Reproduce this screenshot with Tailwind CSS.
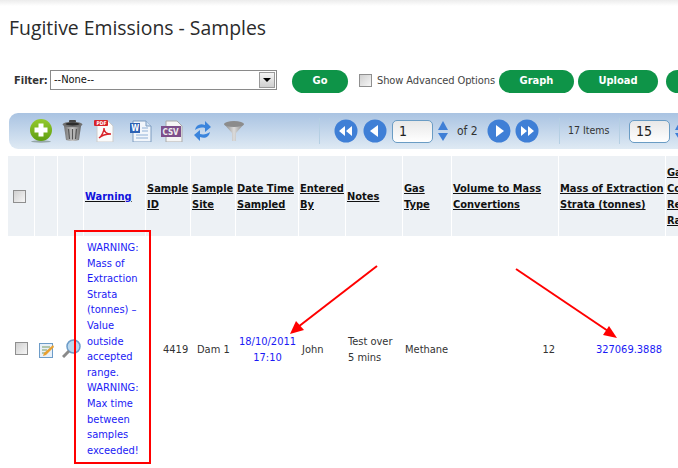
<!DOCTYPE html>
<html lang="en">
<head>
    <meta charset="UTF-8">
    <title>Fugitive Emissions - Samples</title>
    <script src="https://cdn.jsdelivr.net/npm/@tailwindcss/browser@4"></script>
</head>
<body class="relative w-[678px] h-[468px] overflow-hidden bg-white font-['DejaVu_Sans_Condensed','DejaVu_Sans',sans-serif] text-[#333]">

    <div class="h-[6px] bg-gradient-to-b from-[#ececec] to-white"></div>

    <h1 class="pl-[9px] pt-[9px] h-[44px] text-[19.4px] leading-[26px] text-[#2b2b2b] font-['Open_Sans',sans-serif]">Fugitive Emissions - Samples</h1>

    <!-- Filter row -->
    <div class="flex items-center h-[24px] mt-[19px] pl-[14px] whitespace-nowrap">
        <span class="shrink-0 w-[36px] text-[11px] font-bold">Filter:</span>
        <div class="shrink-0 flex items-center justify-between w-[227px] h-[20px] -mt-[2px] border border-[#8a8a8a] pl-[3px] text-[11px] text-[#111]">
            --None--
            <span class="flex items-center justify-center w-[16px] h-[16px] mr-px border border-[#999] bg-gradient-to-b from-[#f4f4f4] to-[#cfcfcf]">
                <span class="w-0 h-0 border-x-[4px] border-x-transparent border-t-[4px] border-t-black"></span>
            </span>
        </div>
        <button class="shrink-0 w-[56px] h-[23px] ml-[15px] rounded-full bg-[#0e9448] text-white text-[11px] font-bold">Go</button>
        <span class="shrink-0 w-[13px] h-[13px] -mt-[2px] ml-[11px] border border-[#8f8f8f] bg-gradient-to-br from-[#d0d0d0] to-[#f6f6f6]"></span>
        <span class="shrink-0 w-[118px] ml-[5px] text-[11px] tracking-[-0.1px] text-[#444]">Show Advanced Options</span>
        <button class="shrink-0 w-[75px] h-[23px] ml-[4px] rounded-full bg-[#0e9448] text-white text-[11px] font-bold">Graph</button>
        <button class="shrink-0 w-[80px] h-[23px] ml-[4px] rounded-full bg-[#0e9448] text-white text-[11px] font-bold">Upload</button>
        <button class="shrink-0 w-[40px] h-[23px] ml-[8px] rounded-full bg-[#0e9448]"></button>
    </div>

    <!-- Toolbar -->
    <div class="flex items-center w-[680px] h-[36px] mt-[20px] ml-[9px] rounded-l-[9px] bg-gradient-to-b from-[#a9c3e2] to-[#dfeaf4] whitespace-nowrap">
        <svg class="ml-[21px] shrink-0" width="22" height="24" viewBox="0 0 22 24">
            <defs><linearGradient id="plusFill" x1="0" y1="0" x2="0" y2="1"><stop offset="0" stop-color="#93c92c"/><stop offset="1" stop-color="#5f9e10"/></linearGradient></defs>
            <ellipse cx="11" cy="22.500" rx="10" ry="1.200" fill="#6b7f78" opacity=".6"/>
            <circle cx="11" cy="11" r="11" fill="url(#plusFill)"/>
            <path d="M8.500 4.500h5v4h4v5h-4v4h-5v-4h-4v-5h4z" fill="#fff"/>
        </svg>
        <svg class="ml-[10px] shrink-0" width="21" height="22" viewBox="0 0 21 22">
            <defs><linearGradient id="binFill" x1="0" y1="0" x2="1" y2="0"><stop offset="0" stop-color="#6f6f6f"/><stop offset=".5" stop-color="#c9c9c9"/><stop offset="1" stop-color="#666"/></linearGradient></defs>
            <path d="M2 6h17l-2 14q-6.500 2-13 0z" fill="url(#binFill)"/>
            <ellipse cx="10.500" cy="4.500" rx="10" ry="2.800" fill="#707070"/>
            <ellipse cx="10.500" cy="4" rx="7" ry="1.500" fill="#2d2d2d"/>
            <rect x="7" y="0" width="7" height="2.500" rx="1" fill="#444"/>
            <path d="M6.500 9l1 10M10.500 9v10.500M14.500 9l-1 10" stroke="#555" stroke-width="1.200"/>
        </svg>
        <svg class="ml-[11px] shrink-0" width="20" height="22" viewBox="0 0 20 22">
            <path d="M3 1h11l5 5v16H3z" fill="#fbfbfb" stroke="#ccc"/>
            <rect width="14" height="6" rx="1" fill="#d8232a"/>
            <text x="2.500" y="5" font-size="5" font-weight="700" fill="#fff">PDF</text>
            <path d="M5 18c3-2 5-7 5-10 0 4 3 6 7 6-4 0-9 1-12 4z" fill="none" stroke="#d8232a" stroke-width="1.300"/>
        </svg>
        <svg class="ml-[16px] shrink-0" width="22" height="22" viewBox="0 0 22 22">
            <path d="M3 1h13l5 5v16H3z" fill="#f2f6fb" stroke="#7d9cc0"/>
            <path d="M16 1v5h5" fill="#cfe0f2" stroke="#7d9cc0"/>
            <rect y="3" width="10" height="10" fill="#2c62b5"/>
            <text x="1.200" y="11" font-size="8" font-weight="700" fill="#fff">W</text>
            <path d="M12 8h6M12 11h6M6 15h12M6 18h12" stroke="#8fb0d6"/>
        </svg>
        <svg class="ml-[9px] shrink-0" width="22" height="22" viewBox="0 0 22 22">
            <path d="M5 1h11l5 5v16H5z" fill="#f5f5f5" stroke="#aaa"/>
            <rect y="6" width="20" height="11" fill="#7d4e8a"/>
            <text x="1.500" y="15" font-size="8" font-weight="700" fill="#eee">CSV</text>
        </svg>
        <svg class="ml-[11px] shrink-0" width="17" height="22" viewBox="0 0 17 22">
            <path d="M1 10C2 5 6 3 11 5V1l6 6-6 5V8C7 7 4 8 1 10zM16 12c-1 5-5 7-10 5v4l-6-6 6-5v4c4 1 7 0 10-2z" fill="#3a84dc"/>
        </svg>
        <svg class="ml-[13px] shrink-0" width="20" height="20" viewBox="0 0 20 20">
            <defs><linearGradient id="funnelFill" x1="0" y1="0" x2="1" y2="0"><stop offset="0" stop-color="#808080"/><stop offset=".5" stop-color="#dcdcdc"/><stop offset="1" stop-color="#808080"/></linearGradient></defs>
            <path d="M0 3q10 5 20 0l-8 9v8H8v-8z" fill="url(#funnelFill)"/>
            <ellipse cx="10" cy="3" rx="10" ry="3" fill="#8c8c8c"/>
        </svg>
        <span class="shrink-0 ml-[75px] w-px h-[26px] bg-[#b5cfe3]"></span>
        <!-- pager -->
        <svg class="ml-[14px] shrink-0" width="24" height="24" viewBox="0 0 24 24"><circle cx="12" cy="12" r="11.500" fill="#3f7fd6"/><path d="M11 7v10l-6-5zM18 7v10l-6-5z" fill="#fff"/></svg>
        <svg class="ml-[5px] shrink-0" width="24" height="24" viewBox="0 0 24 24"><circle cx="12" cy="12" r="11.500" fill="#3f7fd6"/><path d="M15 6v12l-8-6z" fill="#fff"/></svg>
        <span class="shrink-0 ml-[5px] flex items-center w-[41px] h-[23px] pl-[6px] rounded-[5px] border border-[#6a9cc4] bg-gradient-to-b from-[#e8e8e8] to-white text-[14px] text-[#222]">1</span>
        <span class="shrink-0 ml-[5px] flex flex-col gap-[3px]">
            <span class="w-0 h-0 border-x-[5px] border-x-transparent border-b-[9px] border-b-[#3f7fd6]"></span>
            <span class="w-0 h-0 border-x-[5px] border-x-transparent border-t-[8px] border-t-[#3f7fd6]"></span>
        </span>
        <span class="shrink-0 ml-[9px] w-[30px] text-[12px]">of 2</span>
        <svg class="shrink-0" width="24" height="24" viewBox="0 0 24 24"><circle cx="12" cy="12" r="11.500" fill="#3f7fd6"/><path d="M9 6v12l8-6z" fill="#fff"/></svg>
        <svg class="ml-[4px] shrink-0" width="24" height="24" viewBox="0 0 24 24"><circle cx="12" cy="12" r="11.500" fill="#3f7fd6"/><path d="M6 7v10l6-5zM13 7v10l6-5z" fill="#fff"/></svg>
        <span class="shrink-0 ml-[20px] w-px h-[26px] bg-[#b5cfe3]"></span>
        <span class="shrink-0 ml-[8px] w-[51px] text-[10.500px]">17 Items</span>
        <span class="shrink-0 w-px h-[26px] bg-[#b5cfe3]"></span>
        <span class="shrink-0 ml-[9px] flex items-center w-[41px] h-[23px] pl-[6px] rounded-[5px] border border-[#6a9cc4] bg-gradient-to-b from-[#e8e8e8] to-white text-[14px] text-[#222]">15</span>
        <span class="shrink-0 ml-[5px] flex flex-col gap-[3px]">
            <span class="w-0 h-0 border-x-[5px] border-x-transparent border-b-[9px] border-b-[#3f7fd6]"></span>
            <span class="w-0 h-0 border-x-[5px] border-x-transparent border-t-[8px] border-t-[#3f7fd6]"></span>
        </span>
    </div>

    <!-- Samples table -->
    <table class="table-fixed border-separate border-spacing-0 w-[670px] mt-[7px] ml-[8px] text-[11px] leading-[16px]">
        <colgroup>
            <col class="w-[27px]"><col class="w-[23px]"><col class="w-[26px]"><col class="w-[62px]"><col class="w-[45px]"><col class="w-[45px]"><col class="w-[63px]"><col class="w-[47px]"><col class="w-[57px]"><col class="w-[49px]"><col class="w-[107px]"><col class="w-[107px]"><col class="w-[12px]">
        </colgroup>
        <thead>
            <tr class="h-[80px] bg-[#edf1f5] text-left font-bold underline text-[#111]">
                <th class="border-r border-white pl-[5px]"><span class="block w-[13px] h-[13px] border border-[#8f8f8f] bg-gradient-to-br from-[#d0d0d0] to-[#f6f6f6]"></span></th>
                <th class="border-r border-white"></th>
                <th class="border-r border-white"></th>
                <th class="border-r border-white pl-[1px] pt-[2px] text-[#1111dd]">Warning</th>
                <th class="border-r border-white pl-[1px] pt-[2px]">Sample ID</th>
                <th class="border-r border-white pl-[1px] pt-[2px]">Sample Site</th>
                <th class="border-r border-white pl-[1px] pt-[2px]">Date Time Sampled</th>
                <th class="border-r border-white pl-[1px] pt-[2px] whitespace-nowrap overflow-hidden">Entered<br>By</th>
                <th class="border-r border-white pl-[1px] pt-[2px]">Notes</th>
                <th class="border-r border-white pl-[1px] pt-[2px]">Gas Type</th>
                <th class="border-r border-white pl-[1px] pt-[2px]">Volume to Mass Convertions</th>
                <th class="border-r border-white pl-[1px] pt-[2px] whitespace-nowrap overflow-hidden">Mass of Extraction<br>Strata (tonnes)</th>
                <th class="pl-[1px] pt-[2px] whitespace-nowrap">Gas<br>Con<br>Rel<br>Rat</th>
            </tr>
        </thead>
        <tbody>
            <tr class="text-[11px] text-[#333]">
                <td class="pl-[7px]"><span class="block w-[13px] h-[13px] -mt-[2px] border border-[#8f8f8f] bg-gradient-to-br from-[#d0d0d0] to-[#f6f6f6]"></span></td>
                <td class="pl-[4px]">
                    <svg width="15" height="16" viewBox="0 0 15 16"><rect x=".5" y="1.500" width="13" height="14" fill="#e8f0f8" stroke="#6d9cc8"/><path d="M3 5h8M3 8h5M3 11h4" stroke="#7a9a60"/><path d="M14 3l1 2-8 8-3 1 1-3z" fill="#e8a030"/></svg>
                </td>
                <td class="pl-[4px]">
                    <svg class="-mt-[2px]" width="19" height="19" viewBox="0 0 19 19"><circle cx="11.500" cy="7.500" r="6.500" fill="#bcd9ef" stroke="#6d9cc8" stroke-width="1.500"/><path d="M7 12l-6 6" stroke="#8a8a8a" stroke-width="3"/></svg>
                </td>
                <td class="pl-[3px] pt-[4px] pb-[5px] leading-[15.6px] text-[#1a1af5]">WARNING: Mass of Extraction Strata (tonnes) – Value outside accepted range. WARNING: Max time between samples exceeded!</td>
                <td class="pl-[17px]">4419</td>
                <td class="pl-[6px] whitespace-nowrap">Dam 1</td>
                <td class="text-center text-[#1a1af5]">18/10/2011 17:10</td>
                <td class="pl-[3px]">John</td>
                <td class="pl-[2px] pr-[8px]">Test over 5 mins</td>
                <td class="pl-[2px]">Methane</td>
                <td class="pr-[4px] text-right">12</td>
                <td class="pr-[4px] text-right text-[#1a1af5]">327069.3888</td>
                <td></td>
            </tr>
        </tbody>
    </table>

    <!-- Annotations drawn over the screenshot -->
    <div class="absolute left-[74px] top-[230px] w-[77px] h-[234px] border-2 border-[#f00]"></div>
    <svg class="absolute left-0 top-0" width="678" height="468" viewBox="0 0 678 468">
        <path d="M377 266L298 327" stroke="#f00" stroke-width="2" fill="none"/>
        <path d="M290 334l6-13 8 9z" fill="#f00"/>
        <path d="M516 269L608 331" stroke="#f00" stroke-width="2" fill="none"/>
        <path d="M617 338l-14-3 6-9z" fill="#f00"/>
    </svg>
</body>
</html>
